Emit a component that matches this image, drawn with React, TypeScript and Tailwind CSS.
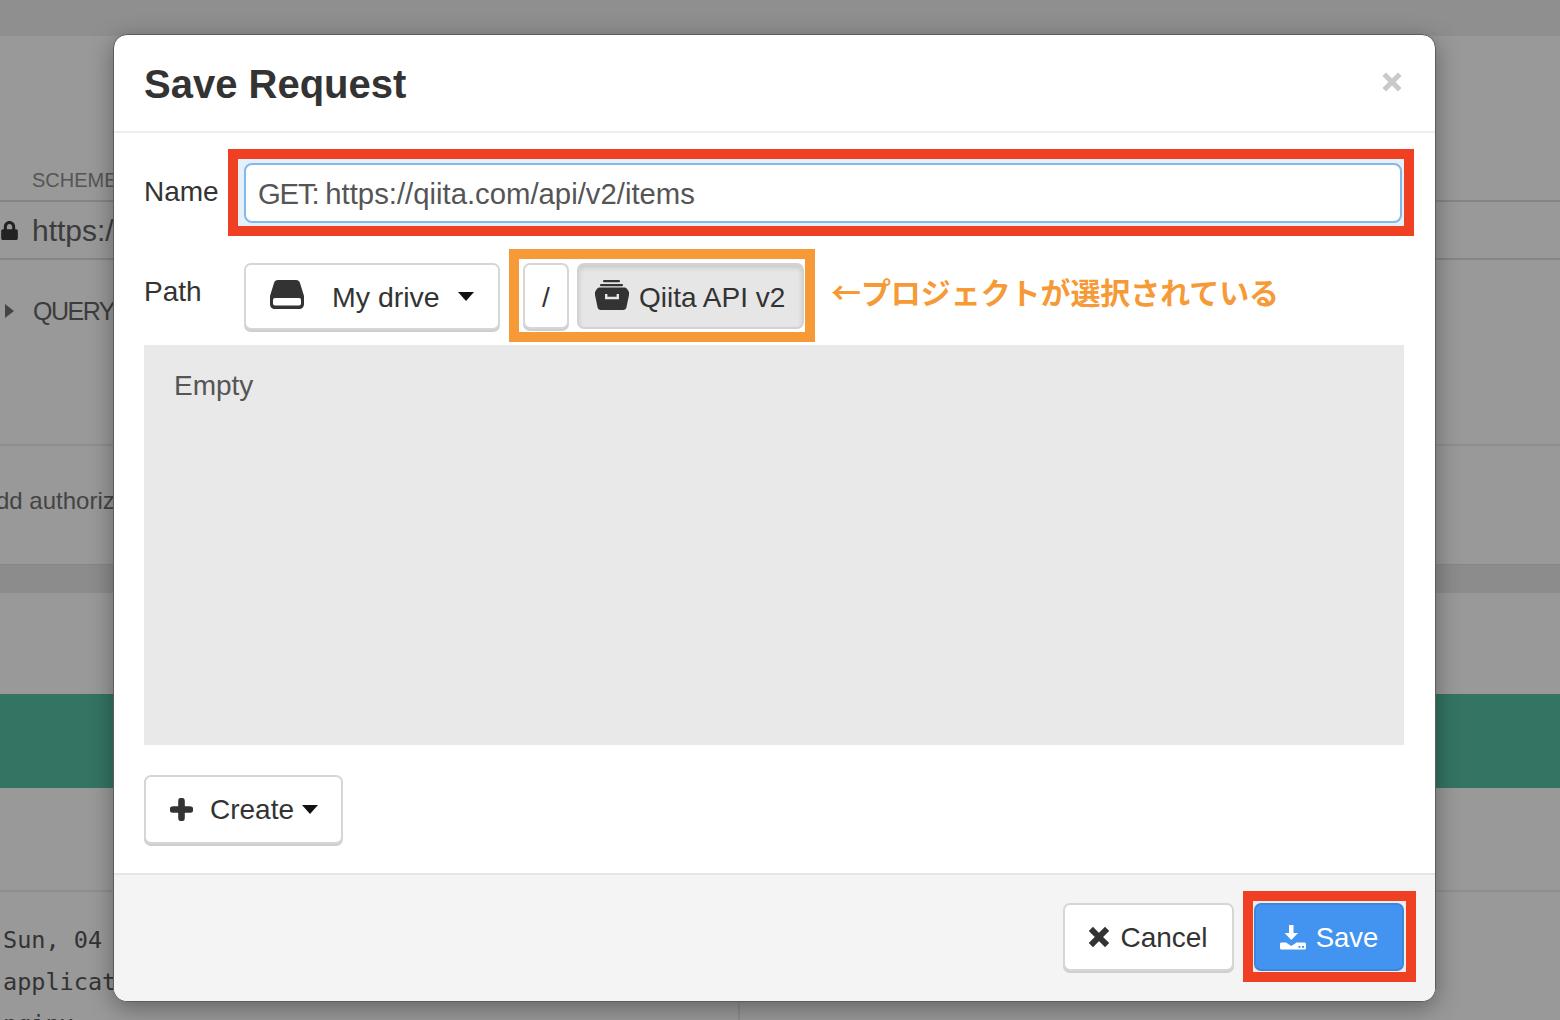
import { FaLock } from "react-icons/fa";

const sans = "font-['Liberation_Sans',Arial,sans-serif]";

function Caret({ className }: { className: string }) {
  return (
    <svg viewBox="0 0 16 9" className={className}>
      <path d="M0 0h16L8 9z" fill="#111" />
    </svg>
  );
}

function Background() {
  return (
    <div className={`h-[1020px] w-[1560px] overflow-hidden bg-[#999] text-[#3c3c3c] ${sans}`}>
      <div className="h-[36px] bg-[#8f8f8f]" />
      <div className="flex h-[164px] items-end pb-[8px] pl-[32px] text-[20px] leading-[24px] text-[#555]">SCHEME</div>
      <div className="flex h-[60px] items-center gap-[14px] border-y-2 border-[#858585] pl-[1px] text-[30px]">
        <FaLock className="h-[19px] w-[17px] text-[#222]" />
        <span>https://</span>
      </div>
      <div className="flex h-[186px] items-start gap-[19px] border-b-2 border-[#8e8e8e] pl-[5px] pt-[35px] text-[25px] leading-[32px] tracking-[-1.5px]">
        <svg viewBox="0 0 9 14" className="mt-[9px] h-[14px] w-[9px]">
          <path d="M0 0l9 7-9 7z" fill="#444" />
        </svg>
        <span>QUERY</span>
      </div>
      <div className="ml-[-20px] h-[118px] pt-[41px] text-[24px] leading-[28px] text-[#444]">Add authorization</div>
      <div className="h-[29px] bg-[#8c8c8c] shadow-[inset_0_1px_0_#868686]" />
      <div className="h-[101px]" />
      <div className="h-[94px] bg-[#347463]" />
      <div className="h-[104px] border-b-2 border-[#8e8e8e]" />
      <div className="flex">
        <div className="w-[740px] border-r-2 border-[#8e8e8e] pl-[3px] pt-[27px] font-['DejaVu_Sans_Mono',monospace] text-[23.5px] leading-[42px] text-[#333]">
          <div>Sun, 04</div>
          <div>applicat</div>
          <div>nginx</div>
        </div>
      </div>
    </div>
  );
}

function HddIcon() {
  return (
    <svg viewBox="0 0 34 29" className="mb-[4px] h-[29px] w-[34px] shrink-0">
      <path
        d="M8 0h18c2 0 3.400 1 4 3l4 13v8c0 3-2 5-5 5H5c-3 0-5-2-5-5v-8L4 3c.6-2 2-3 4-3z"
        fill="#333"
      />
      <rect x="3" y="18" width="28" height="7.500" rx="2" fill="#fff" />
    </svg>
  );
}

function ArchiveIcon() {
  return (
    <svg viewBox="0 0 34 30" className="mb-[2px] h-[30px] w-[34px] shrink-0">
      <rect x="8" y="0" width="17" height="2.200" rx="1" fill="#333" />
      <rect x="5" y="4" width="23" height="2.200" rx="1" fill="#333" />
      <path
        d="M5 7.500h24c1.500 0 2.500.5 3.500 2l1.500 2.500v3L31.500 27c-.3 1.800-1.500 3-3.500 3H6c-2 0-3.200-1.200-3.500-3L0 15v-3l1.500-2.500c1-1.500 2-2 3.500-2z"
        fill="#333"
      />
      <path d="M11.200 14v4h11.600v-4" fill="none" stroke="#e6e6e6" strokeWidth="2.400" />
    </svg>
  );
}

function PlusIcon() {
  return (
    <svg viewBox="0 0 23 23" className="h-[23px] w-[23px] shrink-0">
      <path d="M11.500 3v17M3 11.500h17" stroke="#333" strokeWidth="6.600" strokeLinecap="round" />
    </svg>
  );
}

function XIcon({ className, color, width }: { className: string; color: string; width: number }) {
  return (
    <svg viewBox="0 0 20 20" className={className}>
      <path d="M4 4l12 12M16 4L4 16" stroke={color} strokeWidth={width} strokeLinecap="square" />
    </svg>
  );
}

function DownloadIcon() {
  return (
    <svg viewBox="0 0 26 25" className="h-[25px] w-[26px] shrink-0">
      <path d="M9 0h4.500v8H18l-6.700 7L4.600 8H9z" fill="#fff" />
      <path
        d="M1.500 17.500H6l5.300 3.500 5.300-3.500h7.900c.9 0 1.500.6 1.500 1.500v4c0 .9-.6 1.500-1.500 1.500h-23C.6 24.500 0 23.900 0 23v-4c0-.9.6-1.500 1.500-1.500z"
        fill="#fff"
      />
      <rect x="18.500" y="21" width="2" height="1.800" fill="#4294f0" />
      <rect x="22" y="21" width="2" height="1.800" fill="#4294f0" />
    </svg>
  );
}

const btn =
  "flex items-center rounded-[7px] border-2 border-[#d6d6d6] bg-white shadow-[0_2px_0_#cfcfcf] text-[#333]";

function Modal() {
  return (
    <div
      className={`absolute left-[113px] top-[34px] flex h-[968px] w-[1323px] flex-col rounded-[14px] border border-[#5c5c5c] bg-white text-[#333] shadow-[0_6px_24px_rgba(0,0,0,0.35)] ${sans}`}
    >
      <div className="flex h-[98px] shrink-0 items-start justify-between border-b-2 border-[#eee] pl-[30px] pr-[33px]">
        <h2 className="pt-[25px] text-[40px] font-bold leading-[48px]">Save Request</h2>
        <XIcon className="mt-[37px] h-[20px] w-[20px]" color="#c9c9c9" width={5} />
      </div>

      <div className="flex flex-1 flex-col pl-[30px] pr-[31px]">
        <div className="flex h-[116px] items-start pt-[16px]">
          <label className="w-[84px] shrink-0 pt-[26px] text-[28px] leading-[34px]">Name</label>
          <div className="h-[87px] w-[1186px] shrink-0 border-[10px] border-[#f04024] bg-[#e6f0fb] pb-[3px] pl-[6px] pr-[2px] pt-[4px]">
            <div className="flex h-[60px] items-center whitespace-pre rounded-[8px] border-2 border-[#82b8ea] bg-white pl-[12px] pt-[2px] text-[29.300px] text-[#555]">
              <span className="tracking-[-1.2px]">GET: </span>
              <span>https://qiita.com/api/v2/items</span>
            </div>
          </div>
        </div>

        <div className="flex h-[96px] items-start">
          <label className="w-[100px] shrink-0 pt-[26px] text-[28px] leading-[34px]">Path</label>
          <div className={`${btn} mt-[14px] h-[67px] w-[256px] pl-[24px] pr-[24px]`}>
            <HddIcon />
            <span className="ml-[28px] pt-[1px] text-[28.500px]">My drive</span>
            <Caret className="ml-auto h-[9px] w-[16px]" />
          </div>
          <div className="ml-[9px] flex h-[93px] w-[306px] shrink-0 items-start gap-[8px] border-[10px] border-[#f59a36] bg-white pl-[4px] pt-[4px]">
            <div className={`${btn} h-[66px] w-[46px] justify-center pt-[3px] text-[28px]`}>/</div>
            <div className="flex h-[66px] w-[227px] items-center gap-[10px] rounded-[7px] border-2 border-[#d2d2d2] bg-[#e6e6e6] pl-[16px] text-[28px] shadow-[inset_0_3px_5px_rgba(0,0,0,0.12)]">
              <ArchiveIcon />
              <span className="pt-[3px]">Qiita API v2</span>
            </div>
          </div>
          <span className="ml-[16px] pt-[22px] font-['Noto_Sans_CJK_JP',sans-serif] text-[30px] font-bold leading-[40px] tracking-[-0.07px] text-[#f59a36]">
            ←プロジェクトが選択されている
          </span>
        </div>

        <div className="h-[400px] shrink-0 bg-[#e9e9e9] pl-[30px] pt-[24px] text-[28px] leading-[34px] text-[#555]">Empty</div>

        <div className={`${btn} mt-[30px] h-[69px] w-[199px] pl-[24px]`}>
          <PlusIcon />
          <span className="ml-[17px] text-[28px]">Create</span>
          <Caret className="ml-[8px] h-[9px] w-[16px]" />
        </div>
      </div>

      <div className="flex h-[128px] shrink-0 items-start rounded-b-[13px] border-t-2 border-[#e5e5e5] bg-[#f4f4f4] pl-[949px] pt-[28px]">
        <div className={`${btn} h-[68px] w-[171px] justify-center gap-[11px]`}>
          <XIcon className="h-[20px] w-[20px]" color="#333" width={6} />
          <span className="pt-[1px] text-[28px]">Cancel</span>
        </div>
        <div className="ml-[9px] mt-[-12px] h-[91px] w-[173px] border-[10px] border-[#f04024] bg-[#f4ece8] pl-[1px] pt-[2px]">
          <div className="flex h-[68px] w-[150px] items-center justify-center gap-[10px] rounded-[7px] border-2 border-[#3b87e0] bg-[#4294f0] text-[27.500px] text-white">
            <DownloadIcon />
            <span className="pt-[1px]">Save</span>
          </div>
        </div>
      </div>
    </div>
  );
}

export default function App() {
  return (
    <div className="relative h-[1020px] w-[1560px] overflow-hidden">
      <Background />
      <Modal />
    </div>
  );
}
